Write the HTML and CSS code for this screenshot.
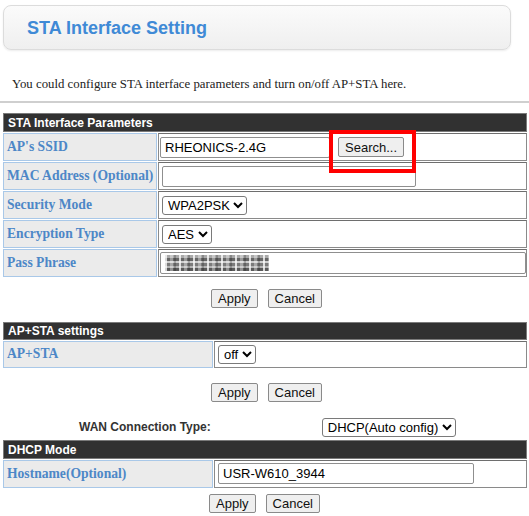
FILE: index.html
```html
<!DOCTYPE html>
<html>
<head>
<meta charset="utf-8">
<link rel="stylesheet" href="styles.css">
</head>
<body>
<div class="page">
  <div class="titlebox"><h1 class="title">STA Interface Setting</h1></div>
  <p class="desc">You could configure STA interface parameters and turn on/off AP+STA here.</p>
  <div class="rule"></div>

  <table class="grid g1">
    <tr class="hrow"><td colspan="2" class="head">STA Interface Parameters</td></tr>
    <tr class="row"><td class="lab w1">AP's SSID</td><td class="val"><input class="txt ssid" type="text" value="RHEONICS-2.4G"><button class="btn search">Search...</button></td></tr>
    <tr class="row"><td class="lab w1">MAC Address (Optional)</td><td class="val"><input class="txt mac" type="text" value=""></td></tr>
    <tr class="row"><td class="lab w1">Security Mode</td><td class="val"><select class="sel"><option>WPA2PSK</option></select></td></tr>
    <tr class="row"><td class="lab w1">Encryption Type</td><td class="val"><select class="sel"><option>AES</option></select></td></tr>
    <tr class="row"><td class="lab w1">Pass Phrase</td><td class="val"><div class="pass"><div class="blur"></div></div></td></tr>
  </table>
  <div class="btns b1"><button class="btn">Apply</button><button class="btn">Cancel</button></div>

  <table class="grid g2">
    <tr class="hrow2"><td colspan="2" class="head">AP+STA settings</td></tr>
    <tr class="row"><td class="lab w2">AP+STA</td><td class="val"><select class="sel"><option>off</option></select></td></tr>
  </table>
  <div class="btns b2"><button class="btn">Apply</button><button class="btn">Cancel</button></div>

  <div class="wan"><span class="wanlab">WAN Connection Type:</span><select class="sel wansel"><option>DHCP(Auto config)</option></select></div>

  <table class="grid g3">
    <tr class="hrow"><td colspan="2" class="head">DHCP Mode</td></tr>
    <tr class="row"><td class="lab w2">Hostname(Optional)</td><td class="val"><input class="txt host" type="text" value="USR-W610_3944"></td></tr>
  </table>
  <div class="btns b3"><button class="btn">Apply</button><button class="btn">Cancel</button></div>

  <div class="highlight"></div>
</div>
</body>
</html>
```
FILE: styles.css
```css
html, body { margin: 0; padding: 0; background: #fff; }
body { font-family: "Liberation Serif", "Times New Roman", serif; }
.page { position: relative; width: 529px; }

.titlebox {
  margin: 5px 18px 0 3px;
  height: 45px;
  box-sizing: border-box;
  border: 1px solid #dcdcdc;
  border-radius: 8px;
  background: linear-gradient(#fbfbfb, #efefef);
  box-shadow: 0 1px 2px rgba(0,0,0,0.08);
  display: flex;
  align-items: center;
  padding-left: 23px;
  padding-top: 2px;
}
.title {
  margin: 0;
  font-family: "Liberation Sans", Arial, sans-serif;
  font-weight: bold;
  font-size: 18px;
  color: #3f8ad6;
}
.desc {
  margin: 26px 0 0 12px;
  font-size: 12.8px;
  line-height: 16px;
  color: #222;
}
.rule {
  margin: 9px 0 0 0;
  height: 2px;
  background: #cfcfcf;
}

.grid {
  margin: 9px 0 0 2px;
  width: 526px;
  border-collapse: separate;
  border-spacing: 1px;
}
.grid td { padding: 0; box-sizing: border-box; }
.hrow { height: 19px; }
.hrow2 { height: 18px; }
.row { height: 27.5px; }
.g1 .row { height: 28px; }
.head {
  background: #313131;
  border: 1px solid #7a7a7a;
  color: #fff;
  font-family: "Liberation Sans", Arial, sans-serif;
  font-weight: bold;
  font-size: 12px;
  padding-left: 4px !important;
}
.lab {
  background: #ebebeb;
  border: 1px solid #a9c8e8;
  color: #4d87c7;
  font-weight: bold;
  font-size: 13.6px;
  padding-left: 3px !important;
  white-space: nowrap;
}
.w1 { width: 155px; }
.w2 { width: 210px; }
.val {
  border: 1px solid #8a8a8a;
  border-top-color: #6e6e6e;
  padding-left: 1px !important;
}

.txt {
  box-sizing: border-box;
  height: 21px;
  border: 1px solid #8f8f8f;
  border-radius: 2px;
  font-family: "Liberation Sans", Arial, sans-serif;
  font-size: 13px;
  padding: 0 4px;
  vertical-align: middle;
  margin: 0;
  color: #000;
}
.ssid { width: 170px; }
.mac { width: 254px; margin-left: 2px; }
.host { width: 256px; margin-left: 2px; }

.sel {
  height: 19px;
  font-family: "Liberation Sans", Arial, sans-serif;
  font-size: 13px;
  border: 1px solid #7a7a7a;
  border-radius: 3px;
  background: #fff;
  color: #000;
  margin: 0 0 0 2px;
  padding: 0 0 0 1px;
  vertical-align: middle;
}

.btn {
  font-family: "Liberation Sans", Arial, sans-serif;
  font-size: 13px;
  height: 19px;
  padding: 0 6px;
  border: 1px solid #8a8a8a;
  border-radius: 2px;
  background: #efefef;
  color: #111;
  margin: 0;
  vertical-align: middle;
}
.search { margin-left: 8px; height: 20px; padding: 0 6px; }

.pass {
  box-sizing: border-box;
  width: 366px;
  height: 22px;
  border: 1px solid #8f8f8f;
  border-radius: 2px;
  display: flex;
  align-items: center;
  padding-left: 4px;
}
.blur {
  width: 104px;
  height: 16px;
  background:
    repeating-linear-gradient(90deg, rgba(255,255,255,0.75) 0 2px, transparent 2px 5px, rgba(255,255,255,0.35) 5px 8px, transparent 8px 9px, rgba(0,0,0,0.2) 9px 11px, transparent 11px 14px),
    repeating-linear-gradient(0deg, #5a5a5a 0 3px, #b5b5b5 3px 5px, #7b7b7b 5px 8px, #cfcfcf 8px 10px, #666 10px 13px, #aaa 13px 16px);
  filter: blur(0.6px);
}

.btns {
  display: flex;
  justify-content: center;
  gap: 10px;
  padding-left: 4px;
}
.b1 { margin-top: 10.5px; }
.b2 { margin-top: 14px; }
.b3 { margin-top: 5px; padding-left: 0; }
.g2 { margin-top: 13px; }

.wan {
  margin-top: 15px;
  display: flex;
  align-items: center;
  height: 20px;
}
.wanlab {
  margin-left: 79px;
  font-family: "Liberation Sans", Arial, sans-serif;
  font-weight: bold;
  font-size: 12px;
  color: #333;
}
.wansel { margin-left: 111px; }
.g3 { margin-top: 2px; }

.highlight {
  position: absolute;
  left: 329px;
  top: 125px;
  width: 87px;
  height: 43px;
  box-sizing: border-box;
  border: 4px solid #ff0000;
}
```
